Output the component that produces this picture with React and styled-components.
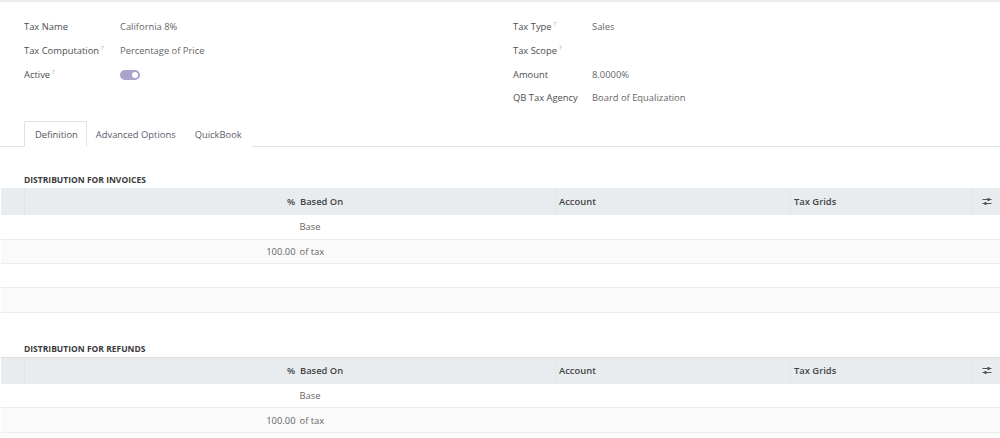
import React from "react";
import styled, { createGlobalStyle } from "styled-components";

const Global = createGlobalStyle`
  html, body { margin: 0; padding: 0; background: #fff; }
  body { font-family: "Open Sans", "Noto Sans", sans-serif; font-size: 9.4px; color: #555; }
  * { box-sizing: border-box; }
`;

const Page = styled.div`
  width: 1000px;
  height: 438px;
  overflow: hidden;
  border-top: 2px solid #ececec;
`;

const FormGrid = styled.div`
  display: grid;
  grid-template-columns: 489px 1fr;
  padding: 13px 0 0 24px;
  height: 119px;
`;

const Group = styled.div`
  display: grid;
  grid-template-columns: ${(p) => p.$labelWidth}px 1fr;
  grid-auto-rows: 23.7px;
  align-items: center;
`;

const Label = styled.div`
  color: #4e4e4e;
  white-space: nowrap;
`;

const Help = styled.sup`
  color: #6fb5bd;
  font-size: 6px;
  margin-left: 2px;
  vertical-align: 4px;
`;

const Value = styled.div`
  color: #666;
  white-space: nowrap;
`;

const Toggle = styled.span`
  display: inline-block;
  position: relative;
  width: 20px;
  height: 10px;
  border-radius: 5px;
  background: #a9a4cc;
  vertical-align: middle;
  &::after {
    content: "";
    position: absolute;
    right: 2px;
    top: 2px;
    width: 6px;
    height: 6px;
    border-radius: 50%;
    background: #fff;
  }
`;

const Tabs = styled.div`
  display: flex;
  padding-left: 24px;
  height: 26px;
  border-bottom: 1px solid #dee2e6;
`;

const Tab = styled.div`
  display: flex;
  align-items: center;
  padding-left: ${(p) => (p.$active ? 10 : 8)}px;
  padding-right: ${(p) => (p.$active ? 8 : 9)}px;
  margin-bottom: -1px;
  color: ${(p) => (p.$active ? "#555" : "#5d5d6e")};
  background: #fff;
  border: 1px solid ${(p) => (p.$active ? "#dee2e6" : "transparent")};
  border-bottom-color: ${(p) => (p.$active ? "#fff" : "transparent")};
  border-radius: 2px 2px 0 0;
`;

const SectionTitle = styled.div`
  padding-left: 24px;
  font-size: 8.5px;
  font-weight: 700;
  color: #3a3a3a;
  margin-top: ${(p) => p.$top}px;
  height: 14px;
  line-height: 12px;
`;

const Table = styled.table`
  width: 1000px;
  border-collapse: collapse;
  table-layout: fixed;
`;

const HeadRow = styled.tr`
  background: #e9ecef;
  height: 27px;
  ${(p) => p.$topLine && `box-shadow: inset 0 1px 0 #dcdfe2;`}
`;

const Th = styled.th`
  font-weight: 600;
  color: #444;
  text-align: ${(p) => p.$align || "left"};
  padding: 0 ${(p) => (p.$first || p.$align === "right" ? 2 : 3)}px;
  border-left: 1px solid ${(p) => (p.$first ? "transparent" : "#e2e5e8")};
  white-space: nowrap;
`;

const Row = styled.tr`
  height: 24.3px;
  background: ${(p) => (p.$alt ? "#fafafa" : "#fff")};
  border-bottom: 1px solid #ececec;
`;

const Td = styled.td`
  color: #666;
  text-align: ${(p) => p.$align || "left"};
  padding: 0 2px;
  white-space: nowrap;
`;

const AdjustIcon = () => (
  <svg width="10" height="9" viewBox="0 0 10 9" style={{ display: "block", margin: "0 auto" }}>
    <line x1="0.5" y1="2.5" x2="9.5" y2="2.5" stroke="#555" strokeWidth="1" />
    <line x1="0.5" y1="6.5" x2="9.5" y2="6.5" stroke="#555" strokeWidth="1" />
    <rect x="5.5" y="1" width="2" height="3" fill="#555" />
    <rect x="2.5" y="5" width="2" height="3" fill="#555" />
  </svg>
);

const Cols = () => (
  <colgroup>
    <col style={{ width: 24 }} />
    <col style={{ width: 273 }} />
    <col style={{ width: 258 }} />
    <col style={{ width: 235 }} />
    <col style={{ width: 182 }} />
    <col style={{ width: 28 }} />
  </colgroup>
);

const DistTable = ({ topLine, rows }) => (
  <Table>
    <Cols />
    <thead>
      <HeadRow $topLine={topLine}>
        <Th $first />
        <Th $align="right">%</Th>
        <Th $first>Based On</Th>
        <Th>Account</Th>
        <Th>Tax Grids</Th>
        <Th>
          <AdjustIcon />
        </Th>
      </HeadRow>
    </thead>
    <tbody>
      {rows.map((r, i) => (
        <Row key={i} $alt={i % 2 === 1}>
          <Td />
          <Td $align="right">{r[0]}</Td>
          <Td>{r[1]}</Td>
          <Td />
          <Td />
          <Td />
        </Row>
      ))}
    </tbody>
  </Table>
);

export default function App() {
  return (
    <Page>
      <Global />
      <FormGrid>
        <Group $labelWidth={96}>
          <Label>Tax Name</Label>
          <Value>California 8%</Value>
          <Label>
            Tax Computation<Help>?</Help>
          </Label>
          <Value>Percentage of Price</Value>
          <Label>
            Active<Help>?</Help>
          </Label>
          <Value>
            <Toggle />
          </Value>
        </Group>
        <Group $labelWidth={79}>
          <Label>
            Tax Type<Help>?</Help>
          </Label>
          <Value>Sales</Value>
          <Label>
            Tax Scope<Help>?</Help>
          </Label>
          <Value />
          <Label>Amount</Label>
          <Value>8.0000%</Value>
          <Label>QB Tax Agency</Label>
          <Value>Board of Equalization</Value>
        </Group>
      </FormGrid>
      <Tabs>
        <Tab $active>Definition</Tab>
        <Tab>Advanced Options</Tab>
        <Tab>QuickBook</Tab>
      </Tabs>
      <SectionTitle $top={27}>DISTRIBUTION FOR INVOICES</SectionTitle>
      <DistTable
        rows={[
          ["", "Base"],
          ["100.00", "of tax"],
          ["", ""],
          ["", ""],
        ]}
      />
      <SectionTitle $top={30}>DISTRIBUTION FOR REFUNDS</SectionTitle>
      <DistTable
        topLine
        rows={[
          ["", "Base"],
          ["100.00", "of tax"],
        ]}
      />
    </Page>
  );
}
